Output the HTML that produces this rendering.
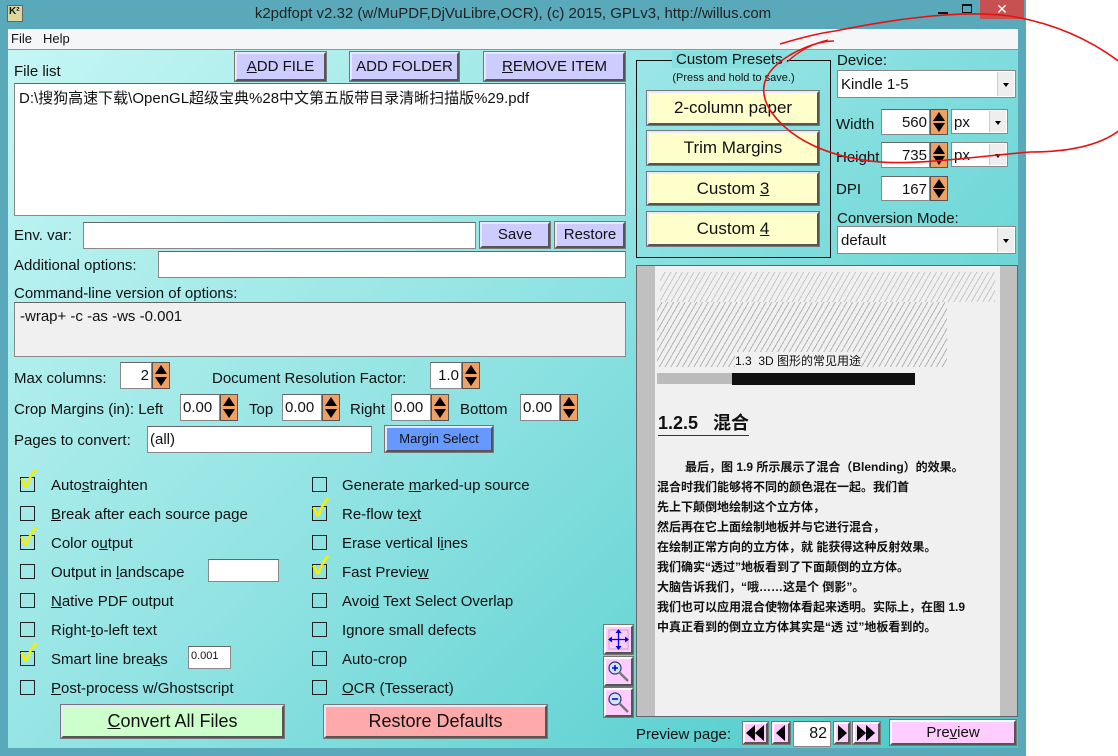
<!DOCTYPE html>
<html><head><meta charset="utf-8">
<style>
*{box-sizing:border-box;margin:0;padding:0}
body{width:1118px;height:756px;position:relative;overflow:hidden;background:#fff;font-family:"Liberation Sans","Noto Sans CJK SC",sans-serif;font-size:15px;color:#111}
.a{position:absolute;white-space:nowrap}
.in{position:absolute;background:#fff;border:1px solid #888;border-top-color:#666}
.btn{position:absolute;border:2px solid;border-color:#e8e8f8 #555 #555 #e8e8f8;outline:1px solid #777;text-align:center;font-size:15px}
.b1{background:#ccccff}
.by{background:#ffffcc;font-size:17px}
.sp{position:absolute;width:18px;background:#f0a060;border:1px solid #555}
.sp:before{content:"";position:absolute;left:2px;top:2px;border-left:6px solid transparent;border-right:6px solid transparent;border-bottom:9px solid #000}
.sp:after{content:"";position:absolute;left:2px;bottom:2px;border-left:6px solid transparent;border-right:6px solid transparent;border-top:9px solid #000}
.cb{position:absolute;width:15px;height:15px;border:1px solid #222}
.ck{position:absolute;left:-1px;top:-10px;color:#f5f000;font-size:24px;font-weight:bold;line-height:24px}
.sel{position:absolute;background:#fff;border:1px solid #888}
.sel i{position:absolute;right:1px;top:1px;bottom:1px;width:17px;background:#eee;border-left:1px solid #ccc}
.sel i:after{content:"";position:absolute;left:5px;top:50%;margin-top:-1px;border-left:3px solid transparent;border-right:3px solid transparent;border-top:4px solid #000}
.pk{position:absolute;background:#ffccff;border:2px solid;border-color:#fff #555 #555 #fff;outline:1px solid #777}
.cn{font-family:"Liberation Sans","Noto Sans CJK SC",sans-serif;font-weight:bold;font-size:12px;color:#111}
u{text-decoration:underline}
</style></head><body>
<div class="a" style="left:0;top:0;width:1026px;height:756px;background:#5aa9bb"></div>
<div class="a" style="left:8px;top:50px;width:1010px;height:698px;background-image:linear-gradient(135deg,#c4f6f4 0%,#92e3e3 45%,#45c8c8 100%)"></div>
<div class="a" style="left:7px;top:5px;width:16px;height:17px;background:#d8d8a0;border:1px solid #666;font-size:10px;font-weight:bold;line-height:12px;padding-left:1px">K²</div>
<div class="a" style="left:0;width:1026px;top:5px;text-align:center;font-size:15px;color:#222">k2pdfopt v2.32 (w/MuPDF,DjVuLibre,OCR), (c) 2015, GPLv3, http://willus.com</div>
<div class="a" style="left:938px;top:12px;width:10px;height:2px;background:#111"></div>
<div class="a" style="left:962px;top:4px;width:10px;height:9px;border:1px solid #111;border-top-width:2px"></div>
<div class="a" style="left:980px;top:0;width:44px;height:19px;background:#c75050;color:#fff;text-align:center;font-size:14px;line-height:19px">✕</div>
<div class="a" style="left:8px;top:29px;width:1010px;height:20px;background:#f5f6f7"></div>
<div class="a" style="left:11px;top:31px;font-size:13px">File</div>
<div class="a" style="left:43px;top:31px;font-size:13px">Help</div>

<div class="a" style="left:14px;top:63px">File list</div>
<div class="btn b1" style="left:235px;top:52px;width:91px;height:29px;line-height:25px"><u>A</u>DD FILE</div>
<div class="btn b1" style="left:350px;top:52px;width:109px;height:29px;line-height:25px">ADD FOLDER</div>
<div class="btn b1" style="left:484px;top:52px;width:141px;height:29px;line-height:25px"><u>R</u>EMOVE ITEM</div>
<div class="in" style="left:14px;top:83px;width:612px;height:133px;padding:3px 4px;font-size:15px">D:\搜狗高速下载\OpenGL超级宝典%28中文第五版带目录清晰扫描版%29.pdf</div>

<div class="a" style="left:14px;top:227px">Env. var:</div>
<div class="in" style="left:83px;top:222px;width:393px;height:27px"></div>
<div class="btn b1" style="left:480px;top:222px;width:70px;height:26px;line-height:22px">Save</div>
<div class="btn b1" style="left:555px;top:222px;width:70px;height:26px;line-height:22px">Restore</div>
<div class="a" style="left:14px;top:257px">Additional options:</div>
<div class="in" style="left:158px;top:251px;width:468px;height:27px"></div>
<div class="a" style="left:14px;top:285px">Command-line version of options:</div>
<div class="in" style="left:14px;top:302px;width:612px;height:55px;background:#f0f0f0;padding:5px 5px">-wrap+ -c -as -ws -0.001</div>

<div class="a" style="left:14px;top:370px">Max columns:</div>
<div class="in" style="left:120px;top:362px;width:32px;height:27px;text-align:right;padding:4px 2px">2</div><div class="sp" style="left:152px;top:362px;height:27px"></div>
<div class="a" style="left:212px;top:370px">Document Resolution Factor:</div>
<div class="in" style="left:430px;top:362px;width:32px;height:27px;text-align:right;padding:4px 2px">1.0</div><div class="sp" style="left:462px;top:362px;height:27px"></div>

<div class="a" style="left:14px;top:401px">Crop Margins (in): Left</div>
<div class="in" style="left:180px;top:394px;width:40px;height:27px;padding:4px 2px">0.00</div><div class="sp" style="left:220px;top:394px;height:27px"></div>
<div class="a" style="left:249px;top:401px">Top</div>
<div class="in" style="left:282px;top:394px;width:40px;height:27px;padding:4px 2px">0.00</div><div class="sp" style="left:322px;top:394px;height:27px"></div>
<div class="a" style="left:350px;top:401px">Right</div>
<div class="in" style="left:391px;top:394px;width:40px;height:27px;padding:4px 2px">0.00</div><div class="sp" style="left:431px;top:394px;height:27px"></div>
<div class="a" style="left:460px;top:401px">Bottom</div>
<div class="in" style="left:520px;top:394px;width:40px;height:27px;padding:4px 2px">0.00</div><div class="sp" style="left:560px;top:394px;height:27px"></div>

<div class="a" style="left:14px;top:432px">Pages to convert:</div>
<div class="in" style="left:147px;top:426px;width:225px;height:27px;padding:4px 2px">(all)</div>
<div class="btn" style="left:385px;top:426px;width:108px;height:26px;line-height:22px;background:#6699ff;font-size:13px">Margin Select</div>

<div class="cb" style="left:20px;top:477px"><span class="ck">✓</span></div><div class="a" style="left:51px;top:477px">Auto<u>s</u>traighten</div>
<div class="cb" style="left:20px;top:506px"></div><div class="a" style="left:51px;top:506px"><u>B</u>reak after each source page</div>
<div class="cb" style="left:20px;top:535px"><span class="ck">✓</span></div><div class="a" style="left:51px;top:535px">Color o<u>u</u>tput</div>
<div class="cb" style="left:20px;top:564px"></div><div class="a" style="left:51px;top:564px">Output in <u>l</u>andscape</div>
<div class="in" style="left:208px;top:559px;width:71px;height:23px"></div>
<div class="cb" style="left:20px;top:593px"></div><div class="a" style="left:51px;top:593px"><u>N</u>ative PDF output</div>
<div class="cb" style="left:20px;top:622px"></div><div class="a" style="left:51px;top:622px">Right-<u>t</u>o-left text</div>
<div class="cb" style="left:20px;top:651px"><span class="ck">✓</span></div><div class="a" style="left:51px;top:651px">Smart line brea<u>k</u>s</div>
<div class="in" style="left:188px;top:646px;width:43px;height:23px;font-size:11px;padding:3px 2px">0.001</div>
<div class="cb" style="left:20px;top:680px"></div><div class="a" style="left:51px;top:680px"><u>P</u>ost-process w/Ghostscript</div>

<div class="cb" style="left:312px;top:477px"></div><div class="a" style="left:342px;top:477px">Generate <u>m</u>arked-up source</div>
<div class="cb" style="left:312px;top:506px"><span class="ck">✓</span></div><div class="a" style="left:342px;top:506px">Re-flow te<u>x</u>t</div>
<div class="cb" style="left:312px;top:535px"></div><div class="a" style="left:342px;top:535px">Erase vertical l<u>i</u>nes</div>
<div class="cb" style="left:312px;top:564px"><span class="ck">✓</span></div><div class="a" style="left:342px;top:564px">Fast Previe<u>w</u></div>
<div class="cb" style="left:312px;top:593px"></div><div class="a" style="left:342px;top:593px">Avoi<u>d</u> Text Select Overlap</div>
<div class="cb" style="left:312px;top:622px"></div><div class="a" style="left:342px;top:622px">Ignore small defects</div>
<div class="cb" style="left:312px;top:651px"></div><div class="a" style="left:342px;top:651px">Auto-crop</div>
<div class="cb" style="left:312px;top:680px"></div><div class="a" style="left:342px;top:680px"><u>O</u>CR (Tesseract)</div>

<div class="btn" style="left:61px;top:705px;width:223px;height:33px;line-height:29px;background:#ccffcc;font-size:18px"><u>C</u>onvert All Files</div>
<div class="btn" style="left:324px;top:705px;width:223px;height:33px;line-height:29px;background:#ffaaaa;font-size:18px">Restore Defaults</div>

<div class="a" style="left:636px;top:60px;width:195px;height:198px;border:1px solid #111"></div>
<div class="a" style="left:672px;top:51px;padding:0 4px;background:#86e0e0;font-size:15px">Custom Presets</div>
<div class="a" style="left:636px;top:72px;width:195px;text-align:center;font-size:11px">(Press and hold to save.)</div>
<div class="btn by" style="left:647px;top:91px;width:172px;height:34px;line-height:30px">2-column paper</div>
<div class="btn by" style="left:647px;top:131px;width:172px;height:34px;line-height:30px">Trim Margins</div>
<div class="btn by" style="left:647px;top:172px;width:172px;height:33px;line-height:29px">Custom <u>3</u></div>
<div class="btn by" style="left:647px;top:212px;width:172px;height:34px;line-height:30px">Custom <u>4</u></div>

<div class="a" style="left:837px;top:52px">Device:</div>
<div class="sel" style="left:837px;top:70px;width:179px;height:28px;padding:5px 3px">Kindle 1-5<i></i></div>
<div class="a" style="left:836px;top:116px">Width</div>
<div class="in" style="left:881px;top:109px;width:49px;height:26px;text-align:right;padding:4px 2px">560</div><div class="sp" style="left:930px;top:109px;height:26px"></div>
<div class="sel" style="left:951px;top:109px;width:57px;height:25px;padding:4px 2px">px<i></i></div>
<div class="a" style="left:836px;top:149px">Height</div>
<div class="in" style="left:881px;top:142px;width:49px;height:26px;text-align:right;padding:4px 2px">735</div><div class="sp" style="left:930px;top:142px;height:26px"></div>
<div class="sel" style="left:951px;top:142px;width:57px;height:25px;padding:4px 2px">px<i></i></div>
<div class="a" style="left:836px;top:181px">DPI</div>
<div class="in" style="left:881px;top:176px;width:49px;height:25px;text-align:right;padding:4px 2px">167</div><div class="sp" style="left:930px;top:176px;height:25px"></div>
<div class="a" style="left:837px;top:210px">Conversion Mode:</div>
<div class="sel" style="left:837px;top:226px;width:179px;height:28px;padding:5px 3px">default<i></i></div>

<div class="a" style="left:636px;top:265px;width:382px;height:452px;background:#c0c0c0;border:1px solid #666"></div>
<div class="a" style="left:655px;top:266px;width:345px;height:450px;background:#f0f0f0"></div>
<div class="a" style="left:660px;top:272px;width:335px;height:30px;background:repeating-linear-gradient(120deg,#f0f0f0 0 4px,#aaa 4px 5px);opacity:.6"></div>
<div class="a" style="left:657px;top:302px;width:290px;height:65px;background:repeating-linear-gradient(120deg,#f0f0f0 0 4px,#999 4px 5px);opacity:.7"></div>
<div class="a" style="left:735px;top:352px;font-size:12px;background:#f0f0f0">1.3 &nbsp;3D 图形的常见用途</div>
<div class="a" style="left:657px;top:373px;width:75px;height:11px;background:#bbb"></div>
<div class="a" style="left:732px;top:373px;width:183px;height:12px;background:#111"></div>
<div class="a" style="left:658px;top:409px;font-size:18px;font-weight:bold;border-bottom:1px solid #333">1.2.5 &nbsp;&nbsp;混合</div>
<div class="a cn" style="left:685px;top:458px">最后，图 1.9 所示展示了混合（Blending）的效果。</div>
<div class="a cn" style="left:657px;top:478px">混合时我们能够将不同的颜色混在一起。我们首</div>
<div class="a cn" style="left:657px;top:498px">先上下颠倒地绘制这个立方体，</div>
<div class="a cn" style="left:657px;top:518px">然后再在它上面绘制地板并与它进行混合，</div>
<div class="a cn" style="left:657px;top:538px">在绘制正常方向的立方体，就 能获得这种反射效果。</div>
<div class="a cn" style="left:657px;top:558px">我们确实“透过”地板看到了下面颠倒的立方体。</div>
<div class="a cn" style="left:657px;top:578px">大脑告诉我们，“哦……这是个 倒影”。</div>
<div class="a cn" style="left:657px;top:598px">我们也可以应用混合使物体看起来透明。实际上，在图 1.9</div>
<div class="a cn" style="left:657px;top:618px">中真正看到的倒立立方体其实是“透 过”地板看到的。</div>

<div class="pk" style="left:604px;top:625px;width:29px;height:29px"><svg width="25" height="25" viewBox="0 0 25 25" style="position:absolute;left:0;top:0"><rect x="3" y="3" width="19" height="19" fill="none" stroke="#c8a0c8"/><path d="M12.5 3v19M3 12.5h19" stroke="#00f" stroke-width="1.3"/><path d="M12.5 2l-3 4h6zM12.5 23l-3-4h6zM2 12.5l4-3v6zM23 12.5l-4-3v6z" fill="#00f"/></svg></div>
<div class="pk" style="left:604px;top:657px;width:29px;height:29px"><svg width="25" height="25" viewBox="0 0 25 25" style="position:absolute;left:0;top:0"><circle cx="9" cy="9" r="6" fill="#cfe4ff" stroke="#336" stroke-width="1.2"/><path d="M6 9h6M9 6v6" stroke="#00c" stroke-width="1.5"/><path d="M13 13l9 9" stroke="#777" stroke-width="2.5"/></svg></div>
<div class="pk" style="left:604px;top:688px;width:29px;height:29px"><svg width="25" height="25" viewBox="0 0 25 25" style="position:absolute;left:0;top:0"><circle cx="9" cy="9" r="6" fill="#cfe4ff" stroke="#336" stroke-width="1.2"/><path d="M6 9h6" stroke="#00c" stroke-width="1.5"/><path d="M13 13l9 9" stroke="#777" stroke-width="2.5"/></svg></div>

<div class="a" style="left:636px;top:726px">Preview page:</div>
<div class="pk" style="left:743px;top:722px;width:25px;height:22px"><svg width="21" height="18" style="position:absolute;left:0;top:0"><path d="M1 9l9-8v16zM10 9l9-8v16z" fill="#000"/></svg></div>
<div class="pk" style="left:772px;top:722px;width:18px;height:22px"><svg width="14" height="18" style="position:absolute;left:0;top:0"><path d="M2 9l9-8v16z" fill="#000"/></svg></div>
<div class="in" style="left:793px;top:721px;width:38px;height:26px;text-align:right;padding:3px 3px;font-size:16px">82</div>
<div class="pk" style="left:834px;top:722px;width:16px;height:22px"><svg width="12" height="18" style="position:absolute;left:0;top:0"><path d="M2 1l9 8-9 8z" fill="#000"/></svg></div>
<div class="pk" style="left:853px;top:722px;width:27px;height:22px"><svg width="23" height="18" style="position:absolute;left:0;top:0"><path d="M2 1l9 8-9 8zM11 1l9 8-9 8z" fill="#000"/></svg></div>
<div class="pk" style="left:890px;top:720px;width:126px;height:25px;text-align:center;line-height:21px">Pre<u>v</u>iew</div>

<svg class="a" style="left:0;top:0" width="1118" height="756">
<path d="M780 44 C800 38 820 33 835 31 C900 18 960 10 1010 16 C1060 24 1100 45 1130 70" fill="none" stroke="#e81010" stroke-width="1.6"/>
<path d="M1130 120 C1110 145 1070 152 1030 152 C980 156 920 165 880 162 C830 158 790 140 770 110 C758 90 762 72 790 55 C808 45 822 41 834 41" fill="none" stroke="#e81010" stroke-width="1.6"/>
<path d="M787 62 C800 50 815 43 828 40" fill="none" stroke="#e81010" stroke-width="1.4"/>
</svg>
</body></html>
